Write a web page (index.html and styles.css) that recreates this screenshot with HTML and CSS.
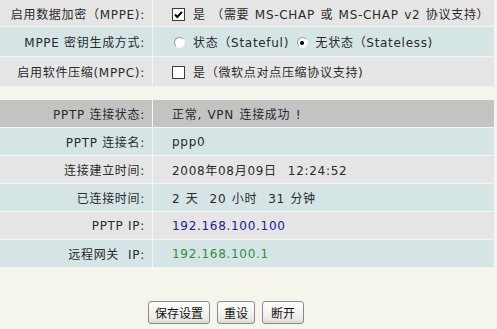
FILE: index.html
```html
<!DOCTYPE html>
<html lang="zh-CN">
<head>
    <meta charset="UTF-8">
    <title>PPTP 设置</title>
    <link rel="stylesheet" href="styles.css">
</head>
<body>
    <table class="cfg-table">
        <tr class="row-grey row-top first">
            <td class="label">启用数据加密（MPPE):</td>
            <td class="value"><span class="chk on"><svg viewBox="0 0 11 11" width="11" height="11"><path d="M2 5.5 L4.3 8 L9 2.8" fill="none" stroke="#000" stroke-width="2"/></svg></span>是 （需要 MS-CHAP 或 MS-CHAP v2 协议支持）</td>
        </tr>
        <tr class="row-blue row-top">
            <td class="label">MPPE 密钥生成方式:</td>
            <td class="value"><span class="radio"></span>状态（Stateful) <span class="radio on"></span>无状态（Stateless)</td>
        </tr>
        <tr class="row-grey row-top">
            <td class="label">启用软件压缩(MPPC):</td>
            <td class="value"><span class="chk"></span>是（微软点对点压缩协议支持)</td>
        </tr>
    </table>

    <table class="cfg-table status">
        <tr class="row-dark">
            <td class="label">PPTP 连接状态:</td>
            <td class="value">正常, VPN 连接成功 !</td>
        </tr>
        <tr class="row-blue">
            <td class="label">PPTP 连接名:</td>
            <td class="value">ppp0</td>
        </tr>
        <tr class="row-grey">
            <td class="label">连接建立时间:</td>
            <td class="value">2008年08月09日&nbsp; 12:24:52</td>
        </tr>
        <tr class="row-blue">
            <td class="label">已连接时间:</td>
            <td class="value">2 天&nbsp; 20 小时&nbsp; 31 分钟</td>
        </tr>
        <tr class="row-grey">
            <td class="label">PPTP IP:</td>
            <td class="value ip-local">192.168.100.100</td>
        </tr>
        <tr class="row-blue">
            <td class="label">远程网关&nbsp; IP:</td>
            <td class="value ip-remote">192.168.100.1</td>
        </tr>
    </table>

    <div class="btn-bar">
        <button class="btn">保存设置</button>
        <button class="btn">重设</button>
        <button class="btn btn-wide">断开</button>
    </div>
</body>
</html>
```

FILE: styles.css
```css
body {
    margin: 0;
    background-color: #f5f5eb;
    font-family: 'DejaVu Sans', 'Noto Sans CJK SC', sans-serif;
    font-size: 12px;
    letter-spacing: 0.7px;
    color: #2a2a2a;
}

.cfg-table {
    width: 494px;
    border-collapse: collapse;
}

.cfg-table td {
    border: 1px solid #f4f4f2;
    padding: 0;
    height: 27px;
    white-space: nowrap;
}

.cfg-table tr.row-top td {
    height: 29px;
}

.cfg-table tr.first td {
    height: 26px;
    border-top: none;
}

.cfg-table td:first-child {
    border-left: none;
}

.cfg-table td:last-child {
    border-right: none;
}

.status {
    margin-top: 12px;
}

.label {
    width: 145px;
    padding-right: 7px !important;
    text-align: right;
}

.value {
    padding-left: 19px !important;
    word-spacing: 1px;
}

.row-grey {
    background-color: #e6e5e5;
}

.row-blue {
    background-color: #d5e4e5;
}

.row-dark {
    background-color: #c4c3c3;
}

.ip-local {
    color: #20209a;
}

.ip-remote {
    color: #2f8f3a;
}

/* 复选框 */
.chk {
    display: inline-block;
    width: 11px;
    height: 11px;
    border: 1px solid #3a3a3a;
    background-color: #fff;
    vertical-align: -2px;
    margin-right: 8px;
}

.chk svg {
    display: block;
}

/* 单选按钮 */
.radio {
    display: inline-block;
    box-sizing: border-box;
    width: 11px;
    height: 11px;
    border-radius: 50%;
    border: 1px solid;
    border-color: #9a9a9a #f6f6f6 #f6f6f6 #9a9a9a;
    background-color: #fff;
    vertical-align: -1px;
    margin-right: 8px;
    margin-left: 2px;
    position: relative;
}

.radio.on::after {
    content: '';
    position: absolute;
    left: 2.5px;
    top: 2.5px;
    width: 4px;
    height: 4px;
    border-radius: 50%;
    background-color: #000;
}

.btn-bar {
    display: flex;
    gap: 7px;
    padding-left: 148px;
    margin-top: 33px;
}

.btn {
    font-family: 'Noto Sans CJK SC', sans-serif;
    font-size: 12px;
    letter-spacing: 0;
    color: #111;
    height: 23px;
    padding: 0 6px;
    border: 1px solid #8a8a8a;
    border-radius: 3px;
    background: linear-gradient(#ffffff, #ecebe6 80%, #d8d6cc);
    line-height: 20px;
}

.btn-wide {
    padding: 0 8px;
}
```
